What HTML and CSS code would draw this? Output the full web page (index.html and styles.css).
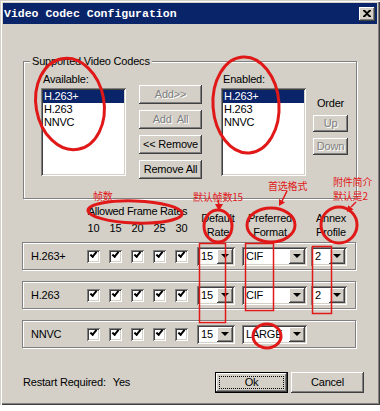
FILE: index.html
```html
<!DOCTYPE html>
<html lang="en">
<head>
    <meta charset="UTF-8">
    <title>Video Codec Configuration</title>
    <link rel="stylesheet" href="styles.css">
</head>
<body>
<div class="dialog">
    <div class="titlebar">
        <span class="title">Video Codec Configuration</span>
        <span class="close">
            <svg width="8" height="7" viewBox="0 0 8 7"><path d="M0 0h2l2 2 2-2h2v1L5 3.5 8 6v1H6L4 5 2 7H0V6l3-2.5L0 1z" fill="#000"/></svg>
        </span>
    </div>

    <div class="group">
        <div class="group-caption">Supported Video Codecs</div>
        <div class="codecs">
            <div class="col-list">
                <div class="lbl">Available:</div>
                <div class="listbox">
                    <div class="item sel">H.263+</div>
                    <div class="item">H.263</div>
                    <div class="item">NNVC</div>
                </div>
            </div>
            <div class="col-btns">
                <div class="btn disabled">Add&gt;&gt;</div>
                <div class="btn disabled">Add&nbsp; All</div>
                <div class="btn">&lt;&lt; Remove</div>
                <div class="btn">Remove All</div>
            </div>
            <div class="col-list enabled">
                <div class="lbl">Enabled:</div>
                <div class="listbox">
                    <div class="item sel">H.263+</div>
                    <div class="item">H.263</div>
                    <div class="item">NNVC</div>
                </div>
            </div>
            <div class="col-order">
                <div class="lbl">Order</div>
                <div class="btn disabled up">Up</div>
                <div class="btn disabled down">Down</div>
            </div>
        </div>
    </div>

    <div class="hdr">
        <div class="hdr-rates">
            <div class="rates-title">Allowed Frame Rates</div>
            <div class="nums"><span>10</span><span>15</span><span>20</span><span>25</span><span>30</span></div>
        </div>
        <div class="hdr-col c1">Default<br>Rate</div>
        <div class="hdr-col c2">Preferred<br>Format</div>
        <div class="hdr-col c3">Annex<br>Profile</div>
    </div>

    <div class="row">
        <div class="row-name">H.263+</div>
        <div class="checks"><span class="chk"></span><span class="chk"></span><span class="chk"></span><span class="chk"></span><span class="chk"></span></div>
        <div class="combo w1"><span class="combo-text">15</span><span class="drop"></span></div>
        <div class="combo w2"><span class="combo-text">CIF</span><span class="drop"></span></div>
        <div class="combo w3"><span class="combo-text">2</span><span class="drop"></span></div>
    </div>
    <div class="row">
        <div class="row-name">H.263</div>
        <div class="checks"><span class="chk"></span><span class="chk"></span><span class="chk"></span><span class="chk"></span><span class="chk"></span></div>
        <div class="combo w1"><span class="combo-text">15</span><span class="drop"></span></div>
        <div class="combo w2"><span class="combo-text">CIF</span><span class="drop"></span></div>
        <div class="combo w3"><span class="combo-text">2</span><span class="drop"></span></div>
    </div>
    <div class="row">
        <div class="row-name">NNVC</div>
        <div class="checks"><span class="chk"></span><span class="chk"></span><span class="chk"></span><span class="chk"></span><span class="chk"></span></div>
        <div class="combo w1"><span class="combo-text">15</span><span class="drop"></span></div>
        <div class="combo w2"><span class="combo-text">LARGE</span><span class="drop"></span></div>
    </div>

    <div class="footer">
        <div class="restart">Restart Required:<span class="yes">Yes</span></div>
        <div class="btn default">Ok</div>
        <div class="btn cancel">Cancel</div>
    </div>

    <!-- red notes drawn on top of the screenshot -->
    <svg class="notes" width="380" height="411" viewBox="0 0 380 411">
        <g fill="none" stroke="#e01818" stroke-width="3">
            <ellipse cx="70" cy="104" rx="34" ry="46" transform="rotate(-10 70 104)"/>
            <ellipse cx="246" cy="105" rx="33" ry="48" transform="rotate(-4 246 105)"/>
            <ellipse cx="135" cy="212" rx="47" ry="11" transform="rotate(2 135 212)"/>
            <ellipse cx="218" cy="226" rx="14" ry="16"/>
            <ellipse cx="271" cy="225" rx="24" ry="17"/>
            <ellipse cx="339" cy="225" rx="18" ry="18"/>
            <ellipse cx="267" cy="336" rx="14" ry="12"/>
        </g>
        <g fill="none" stroke="#e01818" stroke-width="1.5">
            <rect x="199.5" y="243.5" width="26" height="79"/>
            <rect x="245.5" y="243.5" width="28" height="67"/>
            <rect x="312.5" y="246.5" width="19" height="67"/>
            <line x1="218" y1="200" x2="219" y2="205"/>
            <line x1="287" y1="191" x2="282" y2="201"/>
            <line x1="356" y1="202" x2="351" y2="207"/>
        </g>
        <g fill="#e01818">
            <polygon points="219,211 215,204 223,204"/>
            <polygon points="279,206 285,202.5 279,199"/>
            <polygon points="347,212 353.5,209.6 348.1,205.2"/>
        </g>
        <g class="note-text" fill="#e01818">
            <text x="93" y="200">帧数</text>
            <text x="193" y="201">默认帧数15</text>
            <text x="268" y="190">首选格式</text>
            <text x="333" y="186">附件简介</text>
            <text x="333" y="200">默认是2</text>
        </g>
    </svg>
</div>
</body>
</html>
```

FILE: styles.css
```css
body {
    margin: 0;
    background: #fff;
    font-family: "Liberation Sans", Arial, sans-serif;
    font-size: 11px;
    line-height: 13px;
    color: #000;
}
.dialog {
    position: relative;
    width: 380px;
    height: 405px;
    background: #d4d0c8;
    box-shadow: inset 1px 1px #d4d0c8, inset 2px 2px #fff, inset -1px -1px #404040, inset -2px -2px #808080;
    letter-spacing: -0.2px;
    overflow: hidden;
}
.titlebar {
    margin: 3px 3px 0;
    height: 21px;
    padding: 0 2px 0 1px;
    background: #0a246a;
    display: flex;
    align-items: center;
    justify-content: space-between;
}
.title {
    color: #fff;
    font-family: "Liberation Mono", "Courier New", monospace;
    font-weight: bold;
    font-size: 11.5px;
    letter-spacing: 0;
}
.close {
    width: 16px;
    height: 14px;
    box-sizing: border-box;
    background: #d4d0c8;
    box-shadow: inset -1px -1px #404040, inset 1px 1px #fff, inset -2px -2px #808080;
    display: flex;
    align-items: center;
    justify-content: center;
}

/* raised and sunken */
.btn {
    box-sizing: border-box;
    background: #d4d0c8;
    box-shadow: inset -1px -1px #404040, inset 1px 1px #fff, inset -2px -2px #808080;
    display: flex;
    align-items: center;
    justify-content: center;
}
.btn.disabled {
    color: #808080;
    text-shadow: 1px 1px 0 #fff;
}
.listbox, .chk, .combo {
    box-sizing: border-box;
    background: #fff;
    box-shadow: inset 1px 1px #808080, inset -1px -1px #fff, inset 2px 2px #404040, inset -2px -2px #d4d0c8;
}

/* codec group */
.group {
    margin: 37px 0 0 23px;
    width: 334px;
    height: 138px;
    box-sizing: border-box;
    border: 1px solid #808080;
    box-shadow: 1px 1px 0 #fff, inset 1px 1px 0 #fff;
}
.group-caption {
    width: fit-content;
    margin: -7px 0 0 6px;
    padding: 0 2px;
    background: #d4d0c8;
}
.codecs {
    display: flex;
    margin-top: 5px;
    padding-left: 17px;
}
.col-list .lbl {
    padding-left: 2px;
}
.listbox {
    margin-top: 2px;
    width: 85px;
    height: 88px;
    padding: 2px;
}
.item {
    height: 13px;
    padding-left: 1px;
}
.item.sel {
    background: #0a246a;
    color: #fff;
}
.col-btns {
    margin-left: 13px;
    padding-top: 12px;
    display: flex;
    flex-direction: column;
    gap: 6px;
}
.col-btns .btn {
    width: 63px;
    height: 19px;
}
.enabled {
    margin-left: 19px;
}
.col-order {
    margin-left: 7px;
    width: 35px;
    padding-top: 24px;
    text-align: center;
}
.col-order .btn {
    height: 17px;
}
.up { margin-top: 5px; }
.down { margin-top: 6px; }

/* rates header */
.hdr {
    margin-left: 22px;
    height: 43px;
    display: flex;
    padding-left: 65px;
}
.hdr-rates {
    width: 101px;
    padding-top: 6px;
    display: flex;
    flex-direction: column;
    align-items: center;
}
.rates-title {
    white-space: nowrap;
    letter-spacing: -0.3px;
}
.nums {
    margin-top: 4px;
    display: flex;
    gap: 9px;
}
.nums span {
    width: 13px;
    text-align: center;
    letter-spacing: 0;
}
.hdr-col {
    padding-top: 12px;
    line-height: 14px;
    text-align: center;
}
.c1 { margin-left: 11px; width: 38px; }
.c2 { margin-left: 5px; width: 56px; }
.c3 { margin-left: 13px; width: 40px; }

/* codec rows */
.row {
    margin-left: 22px;
    width: 334px;
    height: 28px;
    box-sizing: border-box;
    border: 1px solid #808080;
    box-shadow: 1px 1px 0 #fff, inset 1px 1px 0 #fff;
    padding-left: 8px;
    display: flex;
    align-items: center;
}
.row + .row {
    margin-top: 11px;
}
.row-name {
    width: 56px;
}
.checks {
    display: flex;
    gap: 9px;
}
.chk {
    width: 13px;
    height: 13px;
    position: relative;
}
.chk::after {
    content: "";
    position: absolute;
    left: 3px;
    top: 2px;
    width: 5px;
    height: 2px;
    border-left: 2px solid #000;
    border-bottom: 2px solid #000;
    transform: rotate(-50deg);
}
.combo {
    height: 19px;
    padding: 2px;
    display: flex;
    align-items: center;
}
.combo-text {
    flex: 1;
    padding-left: 2px;
    overflow: hidden;
}
.drop {
    width: 16px;
    height: 15px;
    box-sizing: border-box;
    background: #d4d0c8;
    box-shadow: inset -1px -1px #404040, inset 1px 1px #fff, inset -2px -2px #808080;
    display: flex;
    align-items: center;
    justify-content: center;
}
.drop::after {
    content: "";
    border-left: 4px solid transparent;
    border-right: 4px solid transparent;
    border-top: 4px solid #000;
}
.w1 { margin-left: 9px; width: 38px; }
.w2 { margin-left: 7px; width: 65px; }
.w3 { margin-left: 4px; width: 36px; }

/* footer */
.footer {
    margin: 24px 0 0 23px;
    width: 341px;
    height: 21px;
    display: flex;
    align-items: center;
}
.restart {
    flex: 1;
}
.yes {
    margin-left: 7px;
}
.footer .btn {
    width: 73px;
    height: 21px;
}
.btn.default {
    position: relative;
    margin-right: 3px;
    box-shadow: inset 0 0 0 1px #000, inset -2px -2px #404040, inset 2px 2px #fff, inset -3px -3px #808080;
}
.btn.default::after {
    content: "";
    position: absolute;
    inset: 4px;
    border: 1px dotted #000;
}

.notes {
    position: absolute;
    left: 0;
    top: 0;
    pointer-events: none;
}
.note-text {
    font-family: "Noto Sans CJK SC", sans-serif;
    font-size: 10px;
}
```
